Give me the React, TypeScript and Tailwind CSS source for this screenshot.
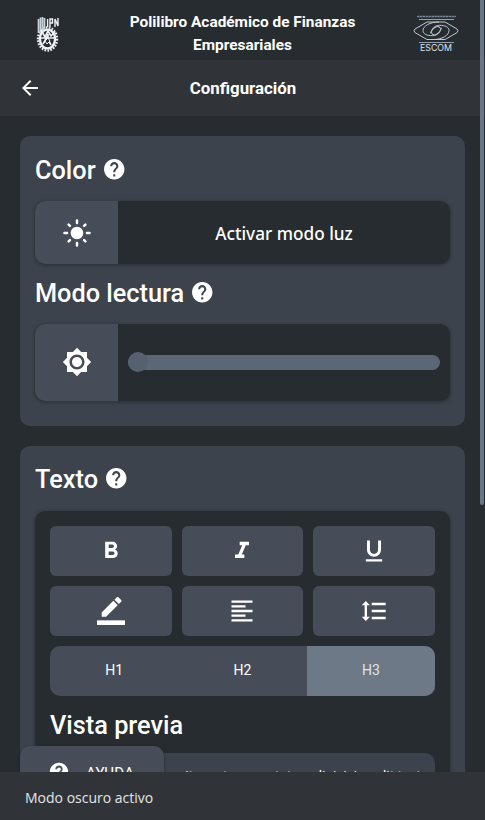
import type { ReactNode } from "react";
import {
  MdArrowBack, MdHelp, MdLightMode, MdBrightnessHigh, MdFormatBold, MdFormatItalic,
  MdFormatUnderlined, MdFormatAlignLeft, MdFormatLineSpacing,
} from "react-icons/md";

function IpnLogo() {
  return (
    <svg width="24" height="36" viewBox="0 0 24 36" fill="none" stroke="#eef2f5">
      <ellipse cx="11.5" cy="23" rx="9.6" ry="11.6" strokeWidth="2.2" strokeDasharray="1.7 1.3" />
      <ellipse cx="11.5" cy="23" rx="7.6" ry="9.4" strokeWidth="2.4" />
      <path d="M2.5 3v14M4.5 1.5v15M6.5 1v15M8.5 2v12" strokeWidth="1.7" stroke="#c9d3da" />
      <path d="M11.6 3v8M14 11V3h2.5v4H14M19 11V3l3 7V2" strokeWidth="1.4" />
      <path d="M5 14l4 7 3-6 3 5 4-4M7 28l4-7 4 8M5 22h13M12 18v8" strokeWidth="1.7" />
      <path d="M9 25l3-3 2 3-3 3z" fill="#293036" strokeWidth="1" />
    </svg>
  );
}

function EscomLogo() {
  return (
    <svg width="46" height="37" viewBox="0 0 46 37" fill="none" stroke="#bdc8d1">
      <path d="M4 1.5h39" stroke="#77879a" strokeWidth="1.4" strokeDasharray="2.4 .5" />
      <path d="M6 4.5h35M6 27.5h35" stroke="#93a2b0" strokeWidth="1.2" />
      <path d="M14 7h18l12 7q2 1.8 0 3.6L32 24.5H14L2 17.6q-2-1.8 0-3.6z" />
      <ellipse cx="23" cy="15.7" rx="5" ry="3.3" transform="rotate(-40 23 15.7)" />
      <path d="M26 7c-9 0-16 4-16 8.5 0 3.5 4 5.2 9.5 5.2 5 0 8-4 9-8M20 24.5c9 0 16-4 16-9 0-3.5-4-5.2-9.500-5.200-5 0-8 4-9 8" />
      <text x="7" y="36" fill="#dce3e9" stroke="none" fontFamily="Inter, sans-serif" fontSize="8.8" textLength="32" lengthAdjust="spacingAndGlyphs">ESCOM</text>
    </svg>
  );
}

function HighlightIcon() {
  return (
    <svg width="28" height="28" viewBox="0 0 24 24" fill="currentColor">
      <path d="M17.750 7L14 3.250l-10 10V17h3.750l10-10zm2.960-2.960c.39-.39.39-1.020 0-1.410L18.370.290c-.39-.39-1.020-.39-1.410 0L15 2.250 18.750 6l1.960-1.960z" />
      <path d="M0 20h24v4H0z" />
    </svg>
  );
}

function Heading({ children }: { children: ReactNode }) {
  return (
    <h2 className="flex h-[34px] items-center gap-[6px] text-[25.3px] font-medium leading-none">
      <span className="pt-0.5">{children}</span>
      <MdHelp size={24.5} className="-mt-px" />
    </h2>
  );
}

function Tool({ children }: { children: ReactNode }) {
  return <button className="flex h-[50px] items-center justify-center rounded-md bg-[#464d58] pb-px">{children}</button>;
}

export default function App() {
  return (
    <div className="relative flex h-[820px] w-[485px] flex-col overflow-hidden bg-[#272c30] font-['Roboto',sans-serif] text-white">
      <header className="flex h-[60px] shrink-0 items-center justify-between pl-9 pr-[26px]">
        <div className="mt-[7px] w-[46px]"><IpnLogo /></div>
        <h1 className="mr-[10px] mt-[7px] w-[260px] text-center text-[15.4px] font-bold leading-[23px]">Polilibro Académico de Finanzas Empresariales</h1>
        <div className="mt-[7px]"><EscomLogo /></div>
      </header>
      <nav className="flex h-14 shrink-0 items-center bg-[#303439] px-[18px]">
        <MdArrowBack size={24} />
        <h2 className="mr-[23px] flex-1 pt-px text-center text-[16.9px] font-bold">Configuración</h2>
      </nav>
      <main className="flex min-h-0 flex-1 flex-col gap-5 overflow-hidden p-5">
        <section className="h-[290px] shrink-0 rounded-[10px] bg-[#3d434c] px-[15px] pt-[17px]">
          <Heading>Color</Heading>
          <div className="mt-[14px] flex h-[63px] overflow-hidden rounded-[10px] bg-[#272c30] shadow-[0_1px_3px_1px_rgba(30,33,38,0.4)]">
            <div className="flex w-[83px] items-center justify-center bg-[#464d58] pt-px"><MdLightMode size={30} /></div>
            <div className="flex flex-1 items-center justify-center pt-[3px] font-['Noto_Sans',sans-serif] text-[17.2px] font-medium">Activar modo luz</div>
          </div>
          <div className="mt-3"><Heading>Modo lectura</Heading></div>
          <div className="mt-[14px] flex h-[77px] overflow-hidden rounded-[10px] bg-[#272c30] shadow-[0_1px_3px_1px_rgba(30,33,38,0.4)]">
            <div className="flex w-[83px] items-center justify-center bg-[#464d58] pb-px"><MdBrightnessHigh size={30} /></div>
            <div className="flex flex-1 items-center px-[10px]">
              <div className="flex h-[15px] flex-1 items-center rounded-full bg-[#5b6677]">
                <div className="mb-px size-5 rounded-full bg-[#566071]" />
              </div>
            </div>
          </div>
        </section>
        <section className="shrink-0 rounded-[10px] bg-[#3d434c] px-[15px] pb-[15px] pt-4">
          <Heading>Texto</Heading>
          <div className="mt-[15px] rounded-[10px] bg-[#272c30] p-[15px] shadow-[0_1px_3px_1px_rgba(30,33,38,0.4)]">
            <div className="grid grid-cols-3 gap-[10px]">
              <Tool><MdFormatBold size={28} /></Tool>
              <Tool><MdFormatItalic size={28} /></Tool>
              <Tool><MdFormatUnderlined size={28} /></Tool>
              <Tool><HighlightIcon /></Tool>
              <Tool><MdFormatAlignLeft size={28} /></Tool>
              <Tool><MdFormatLineSpacing size={28} /></Tool>
            </div>
            <div className="mt-[10px] grid h-[50px] grid-cols-3 overflow-hidden rounded-[10px] bg-[#464d58] text-[14px]">
              <button className="pb-px">H1</button>
              <button className="pb-px">H2</button>
              <button className="bg-[#6d7986] pb-px text-[#e0e3e7]">H3</button>
            </div>
            <h2 className="mt-[13px] text-[25.3px] font-medium leading-[34px]">Vista previa</h2>
            <div className="mt-[10px] h-[120px] rounded-[10px] bg-[#3d434c] p-[10px]">
              <p className="whitespace-nowrap pt-px text-[13.7px] leading-[22px]">Lorem ipsum dolor sit amet consectetur adipisicing elit test</p>
            </div>
          </div>
        </section>
      </main>
      <button className="absolute left-5 top-[746px] flex h-[52px] w-36 items-center gap-4 rounded-[10px] bg-[#464d58] pl-7 text-[15px] tracking-wide shadow-[0_1px_3px_rgba(0,0,0,0.4)]">
        <MdHelp size={22} />
        <span className="pt-0.5">AYUDA</span>
      </button>
      <div className="absolute right-px top-0 h-[505px] w-1 rounded-b-full bg-[#687685]" />
      <div className="absolute bottom-0 left-0 flex h-12 w-full items-center bg-[#303438] px-[25px] pt-0.5 font-['Open_Sans',sans-serif] text-[14px] text-[#e4e6e8]">Modo oscuro activo</div>
    </div>
  );
}
